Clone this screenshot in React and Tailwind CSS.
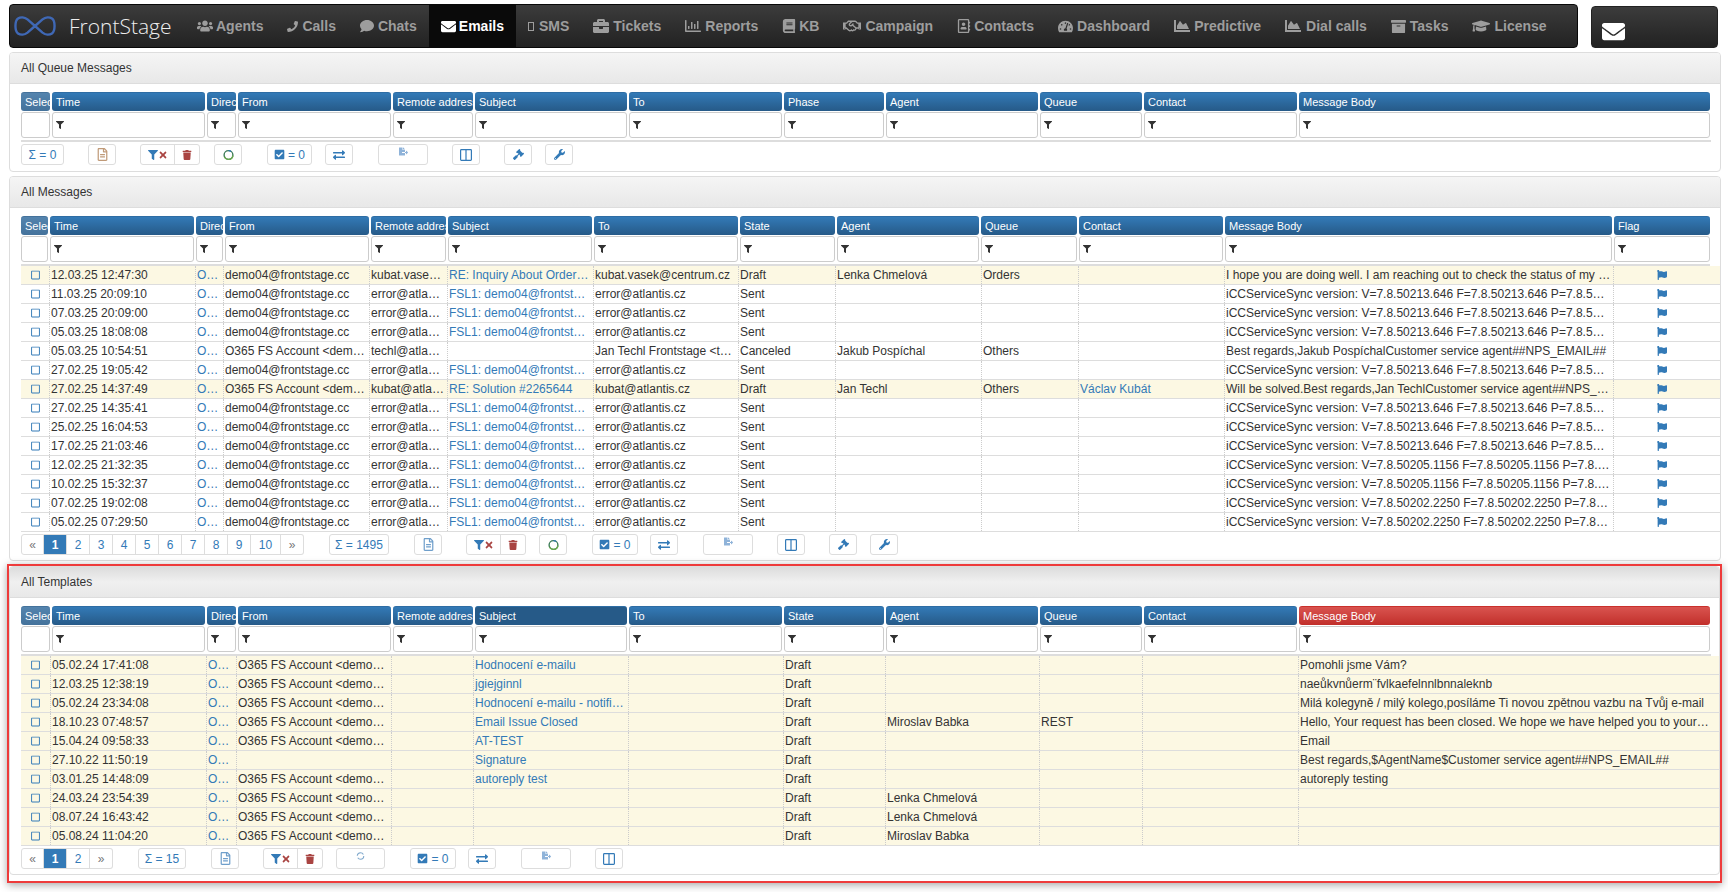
import React from "react";
import {
  FaUsers, FaPhone, FaComment, FaEnvelope, FaBriefcase, FaRegChartBar, FaBook, FaRegHandshake,
  FaRegAddressBook, FaTachometerAlt, FaChartArea, FaArchive, FaGraduationCap, FaFilter, FaTimes,
  FaTrash, FaRegFileAlt, FaCheckSquare, FaExchangeAlt, FaFileExport, FaGavel, FaWrench, FaFlag, FaRegSquare,
} from "react-icons/fa";

const NAV = [
  ["Agents", FaUsers, "w-[19px]", 16],
  ["Calls", FaPhone, "w-[15px]", 11],
  ["Chats", FaComment, "w-[18px]", 14],
  ["Emails", FaEnvelope, "w-[18px]", 15],
  ["SMS", null, "w-[11px]", 0],
  ["Tickets", FaBriefcase, "w-[20px]", 16],
  ["Reports", FaRegChartBar, "w-[20px]", 16],
  ["KB", FaBook, "w-[17px]", 14],
  ["Campaign", FaRegHandshake, "w-[22px]", 18],
  ["Contacts", FaRegAddressBook, "w-[17px]", 14],
  ["Dashboard", FaTachometerAlt, "w-[19px]", 15],
  ["Predictive", FaChartArea, "w-[20px]", 16],
  ["Dial calls", FaChartArea, "w-[21px]", 16],
  ["Tasks", FaArchive, "w-[19px]", 15],
  ["License", FaGraduationCap, "w-[22px]", 18],
];

const T1_HEAD = "grid-cols-[29px_153px_29px_153px_80px_152px_153px_100px_152px_102px_153px_411px]";
const T2_HEAD = "grid-cols-[27px_144px_27px_144px_75px_144px_144px_95px_142px_96px_144px_387px_96px]";
const T2_ROW = "grid-cols-[28px_146px_28px_146px_78px_146px_145px_97px_146px_97px_146px_389px_97px]";
const T3_ROW = "grid-cols-[29px_156px_30px_155px_82px_155px_155px_102px_154px_103px_156px_413px]";

const H1 = ["Select", "Time", "Direction", "From", "Remote address", "Subject", "To", "Phase", "Agent", "Queue", "Contact", "Message Body"];
const H2 = ["Select", "Time", "Direction", "From", "Remote address", "Subject", "To", "State", "Agent", "Queue", "Contact", "Message Body", "Flag"];
const H3 = ["Select", "Time", "Direction", "From", "Remote address", "Subject", "To", "State", "Agent", "Queue", "Contact", "Message Body"];

const DEMO = "demo04@frontstage.cc";
const O365 = "O365 FS Account <demo04@frontstage.cc>";
const ERR = "error@atlantis.cz";
const FSL = "FSL1: demo04@frontstage.cc";
const S1 = "iCCServiceSync version: V=7.8.50213.646 F=7.8.50213.646 P=7.8.50213.646";
const S2 = "iCCServiceSync version: V=7.8.50205.1156 F=7.8.50205.1156 P=7.8.50205.1156";
const S3 = "iCCServiceSync version: V=7.8.50202.2250 F=7.8.50202.2250 P=7.8.50202.2250";

const R2 = [
  ["12.03.25 12:47:30", DEMO, "kubat.vasek@centrum.cz", "RE: Inquiry About Order Status", "kubat.vasek@centrum.cz", "Draft", "Lenka Chmelová", "Orders", "", "I hope you are doing well. I am reaching out to check the status of my order", true],
  ["11.03.25 20:09:10", DEMO, ERR, FSL, ERR, "Sent", "", "", "", S1],
  ["07.03.25 20:09:00", DEMO, ERR, FSL, ERR, "Sent", "", "", "", S1],
  ["05.03.25 18:08:08", DEMO, ERR, FSL, ERR, "Sent", "", "", "", S1],
  ["05.03.25 10:54:51", O365, "techl@atlantis.cz", "", "Jan Techl Frontstage <techl@atlantis.cz>", "Canceled", "Jakub Pospíchal", "Others", "", "Best regards,Jakub PospíchalCustomer service agent##NPS_EMAIL##"],
  ["27.02.25 19:05:42", DEMO, ERR, FSL, ERR, "Sent", "", "", "", S1],
  ["27.02.25 14:37:49", O365, "kubat@atlantis.cz", "RE: Solution #2265644", "kubat@atlantis.cz", "Draft", "Jan Techl", "Others", "Václav Kubát", "Will be solved.Best regards,Jan TechlCustomer service agent##NPS_EMAIL##", true],
  ["27.02.25 14:35:41", DEMO, ERR, FSL, ERR, "Sent", "", "", "", S1],
  ["25.02.25 16:04:53", DEMO, ERR, FSL, ERR, "Sent", "", "", "", S1],
  ["17.02.25 21:03:46", DEMO, ERR, FSL, ERR, "Sent", "", "", "", S1],
  ["12.02.25 21:32:35", DEMO, ERR, FSL, ERR, "Sent", "", "", "", S2],
  ["10.02.25 15:32:37", DEMO, ERR, FSL, ERR, "Sent", "", "", "", S2],
  ["07.02.25 19:02:08", DEMO, ERR, FSL, ERR, "Sent", "", "", "", S3],
  ["05.02.25 07:29:50", DEMO, ERR, FSL, ERR, "Sent", "", "", "", S3],
];

const R3 = [
  ["05.02.24 17:41:08", O365, "", "Hodnocení e-mailu", "", "Draft", "", "", "", "Pomohli jsme Vám?", true],
  ["12.03.25 12:38:19", O365, "", "jgiejginnl", "", "Draft", "", "", "", "naeůkvnůerm¨fvlkaefelnnlbnnaleknb", true],
  ["05.02.24 23:34:08", O365, "", "Hodnocení e-mailu - notifikace", "", "Draft", "", "", "", "Milá kolegyně / milý kolego,posíláme Ti novou zpětnou vazbu na Tvůj e-mail", true],
  ["18.10.23 07:48:57", O365, "", "Email Issue Closed", "", "Draft", "Miroslav Babka", "REST", "", "Hello, Your request has been closed. We hope we have helped you to your satisfaction", true],
  ["15.04.24 09:58:33", O365, "", "AT-TEST", "", "Draft", "", "", "", "Email", true],
  ["27.10.22 11:50:19", "", "", "Signature", "", "Draft", "", "", "", "Best regards,$AgentName$Customer service agent##NPS_EMAIL##", true],
  ["03.01.25 14:48:09", O365, "", "autoreply test", "", "Draft", "", "", "", "autoreply testing", true],
  ["24.03.24 23:54:39", O365, "", "", "", "Draft", "Lenka Chmelová", "", "", "", true],
  ["08.07.24 16:43:42", O365, "", "", "", "Draft", "Lenka Chmelová", "", "", "", true],
  ["05.08.24 11:04:20", O365, "", "", "", "Draft", "Miroslav Babka", "", "", "", true],
];

const BLUE = "#337ab7";

function Logo() {
  return (
    <svg width="42" height="20" viewBox="0 0 42 20" fill="none" stroke="#3f68b5" strokeWidth="2.4" className="shrink-0">
      <path d="M21 10 L13.5 3.4 C10.5 1 6.5 0.9 4 2.6 C0.6 5 0.6 15 4 17.4 C6.5 19.1 10.5 19 13.5 16.6 L21 10 L28.5 3.4 C31.5 1 35.5 0.9 38 2.6 C41.4 5 41.4 15 38 17.4 C35.5 19.1 31.5 19 28.5 16.6 Z" />
    </svg>
  );
}

function NavBar() {
  return (
    <div className="flex pt-[4px] pl-[9px]">
      <nav className="flex w-[1569px] h-[44px] rounded-[4px] border border-[#080808] bg-linear-to-b from-[#3c3c3c] to-[#222222] overflow-hidden">
        <div className="flex items-center w-[175px] shrink-0 pl-[4px] gap-[13px]">
          <Logo />
          <span className="[font-family:'Open_Sans',sans-serif] font-light text-[21px] text-[#eeeeee] leading-none">FrontStage</span>
        </div>
        {NAV.map(([label, Icon, w, size]) => {
          const active = label === "Emails";
          return (
            <div key={label} className={active
              ? "flex items-center px-3 font-bold text-[14px] text-white bg-[#0a0a0a]"
              : "flex items-center px-3 font-bold text-[14px] text-[#9d9d9d]"}>
              <span className={`${w} flex items-center`}>
                {Icon ? <Icon size={size} /> : <span className="block w-[6px] h-[9px] border border-[#9d9d9d]" />}
              </span>
              <span className="whitespace-nowrap">{label}</span>
            </div>
          );
        })}
      </nav>
      <div className="ml-[13px] mt-[2px] w-[127px] h-[42px] rounded-[4px] border border-[#222222] bg-linear-to-b from-[#3c3c3c] to-[#222222] flex items-center pl-[10px] pt-[8px]">
        <FaEnvelope size={23} color="#ffffff" />
      </div>
    </div>
  );
}

function HeadCell({ label, variant }) {
  const base = "h-[19px] rounded-[3px] pl-[4px] flex items-center overflow-hidden whitespace-nowrap text-[11px] font-normal text-white border-t border-[#2e6da4] ";
  const cls = variant === "sel"
    ? "bg-linear-to-b from-[#5484ae] to-[#44729b] border-[#44729b]"
    : variant === "sort"
    ? "bg-[#265a88]"
    : variant === "red"
    ? "bg-linear-to-b from-[#d9534f] to-[#c12e2a] border-[#c9302c]"
    : "bg-linear-to-b from-[#337ab7] to-[#265a88]";
  return <div className={base + cls}>{label}</div>;
}

function Grid({ headers, cols, rowSort, redLast }) {
  return (
    <div className={`grid gap-x-[2px] ${cols}`}>
      {headers.map((h, i) => (
        <HeadCell
          key={h}
          label={h}
          variant={i === 0 ? "sel" : rowSort && h === "Subject" ? "sort" : redLast && h === "Message Body" ? "red" : ""}
        />
      ))}
      {headers.map((h, i) => (
        <div key={h} className="h-[26px] mt-[1px] rounded-[3px] border border-[#cccccc] bg-white flex items-center pl-[3px]">
          {i > 0 && <FaFilter size={8} color="#333333" />}
        </div>
      ))}
    </div>
  );
}

function Rows({ rows, cols, flag }) {
  return (
    <div>
      {rows.map((r) => (
        <div key={r[0]} className={`grid ${cols} h-[19px] border-b border-[#dddddd] text-[12px] leading-[18px] ${r[10] ? "bg-[#fcf8e3]" : "bg-white"}`}>
          <div className="flex items-center justify-center"><FaRegSquare className="w-[11px] h-[10px]" color={BLUE} /></div>
          <Cell>{r[0]}</Cell>
          <Cell blue>Outgoing</Cell>
          <Cell>{r[1]}</Cell>
          <Cell>{r[2]}</Cell>
          <Cell blue>{r[3]}</Cell>
          <Cell>{r[4]}</Cell>
          <Cell>{r[5]}</Cell>
          <Cell>{r[6]}</Cell>
          <Cell>{r[7]}</Cell>
          <Cell blue>{r[8]}</Cell>
          <Cell>{r[9]}</Cell>
          {flag && (
            <div className="border-l border-dotted border-[#cccccc] flex items-center justify-center">
              <FaFlag className="w-[12px] h-[10px]" color={BLUE} />
            </div>
          )}
        </div>
      ))}
    </div>
  );
}

function Cell({ children, blue }) {
  return (
    <div className={`border-l border-dotted border-[#cccccc] pl-[1px] pr-[2px] truncate ${blue ? "text-[#337ab7]" : "text-[#333333]"}`}>
      {children}
    </div>
  );
}

function Btn({ w, ml, children, align }) {
  return (
    <div className={`${w} ${ml} h-[21px] rounded-[3px] border border-[#dddddd] bg-white flex justify-center text-[12px] text-[#337ab7] whitespace-nowrap ${align === "top" ? "items-start pt-[2px]" : "items-center"}`}>
      {children}
    </div>
  );
}

function Ring({ small }) {
  if (small) {
    return (
      <svg width="9" height="10" viewBox="0 0 10 10" fill="none" strokeWidth="1.2">
        <circle cx="5" cy="5" r="3.6" stroke="#7fa8cc" strokeDasharray="9 2.3" />
      </svg>
    );
  }
  return (
    <svg width="11" height="12" viewBox="0 0 12 12" fill="none" strokeWidth="1.5" className="-rotate-90">
      <circle cx="6" cy="6" r="4.8" stroke="#3b7a57" />
      <circle cx="6" cy="6" r="4.8" stroke="#6aa84f" strokeDasharray="12 20" strokeDashoffset="-8" />
      <circle cx="6" cy="6" r="4.8" stroke="#337ab7" strokeDasharray="6 30" strokeDashoffset="3" />
    </svg>
  );
}

function Columns() {
  return (
    <svg width="12" height="12" viewBox="0 0 12 12" fill="none" stroke="#337ab7" strokeWidth="1.2">
      <rect x="0.6" y="0.6" width="10.8" height="10.8" rx="0.8" />
      <line x1="6" y1="1" x2="6" y2="11" />
    </svg>
  );
}

function FilterGroup({ ml }) {
  return (
    <div className={`w-[60px] ${ml} h-[21px] rounded-[3px] border border-[#dddddd] bg-white flex`}>
      <div className="w-[34px] border-r border-[#dddddd] flex items-center justify-center">
        <FaFilter size={10} color={BLUE} />
        <FaTimes size={10} color="#a94442" />
      </div>
      <div className="flex-1 flex items-center justify-center"><FaTrash size={10} color="#a94442" /></div>
    </div>
  );
}

function Pager({ pages }) {
  const cell = "h-[21px] flex items-center justify-center border-y border-r border-[#dddddd] text-[12px] text-[#337ab7]";
  return (
    <div className="flex">
      <div className={`w-[23px] ${cell} border-l rounded-l-[3px] text-[#777777]`}>«</div>
      {pages.map((p) => (
        <div key={p} className={`${p === 10 ? "w-[30px]" : "w-[23px]"} ${cell} ${p === 1 ? "bg-[#337ab7] text-white font-bold border-[#337ab7]" : ""}`}>{p}</div>
      ))}
      <div className={`w-[23px] ${cell} rounded-r-[3px] text-[#777777]`}>»</div>
    </div>
  );
}

function Toolbar1() {
  return (
    <div className="flex mt-[2px]">
      <Btn w="w-[43px]" ml="">Σ = 0</Btn>
      <Btn w="w-[28px]" ml="ml-[24px]"><FaRegFileAlt size={13} color="#c09a78" /></Btn>
      <FilterGroup ml="ml-[24px]" />
      <Btn w="w-[28px]" ml="ml-[14px]"><Ring /></Btn>
      <Btn w="w-[45px]" ml="ml-[25px]"><FaCheckSquare size={11} color={BLUE} /><span className="ml-[3px]">= 0</span></Btn>
      <Btn w="w-[28px]" ml="ml-[13px]"><FaExchangeAlt size={12} color={BLUE} /></Btn>
      <Btn w="w-[50px]" ml="ml-[25px]" align="top"><FaFileExport size={9} color="#8fb3d9" /></Btn>
      <Btn w="w-[28px]" ml="ml-[24px]"><Columns /></Btn>
      <Btn w="w-[28px]" ml="ml-[24px]"><FaGavel size={11} color={BLUE} /></Btn>
      <Btn w="w-[28px]" ml="ml-[13px]"><FaWrench size={11} color={BLUE} /></Btn>
    </div>
  );
}

function Toolbar2() {
  return (
    <div className="flex mt-[2px]">
      <Pager pages={[1, 2, 3, 4, 5, 6, 7, 8, 9, 10]} />
      <Btn w="w-[60px]" ml="ml-[25px]">Σ = 1495</Btn>
      <Btn w="w-[28px]" ml="ml-[25px]"><FaRegFileAlt size={13} color="#6f9fcb" /></Btn>
      <FilterGroup ml="ml-[24px]" />
      <Btn w="w-[28px]" ml="ml-[13px]"><Ring /></Btn>
      <Btn w="w-[46px]" ml="ml-[25px]"><FaCheckSquare size={11} color={BLUE} /><span className="ml-[3px]">= 0</span></Btn>
      <Btn w="w-[28px]" ml="ml-[12px]"><FaExchangeAlt size={12} color={BLUE} /></Btn>
      <Btn w="w-[50px]" ml="ml-[25px]" align="top"><FaFileExport size={9} color="#8fb3d9" /></Btn>
      <Btn w="w-[28px]" ml="ml-[24px]"><Columns /></Btn>
      <Btn w="w-[28px]" ml="ml-[24px]"><FaGavel size={11} color={BLUE} /></Btn>
      <Btn w="w-[28px]" ml="ml-[13px]"><FaWrench size={11} color={BLUE} /></Btn>
    </div>
  );
}

function Toolbar3() {
  return (
    <div className="flex mt-[2px]">
      <Pager pages={[1, 2]} />
      <Btn w="w-[48px]" ml="ml-[25px]">Σ = 15</Btn>
      <Btn w="w-[28px]" ml="ml-[25px]"><FaRegFileAlt size={13} color="#6f9fcb" /></Btn>
      <FilterGroup ml="ml-[24px]" />
      <Btn w="w-[49px]" ml="ml-[13px]" align="top"><Ring small /></Btn>
      <Btn w="w-[46px]" ml="ml-[25px]"><FaCheckSquare size={11} color={BLUE} /><span className="ml-[3px]">= 0</span></Btn>
      <Btn w="w-[28px]" ml="ml-[12px]"><FaExchangeAlt size={12} color={BLUE} /></Btn>
      <Btn w="w-[50px]" ml="ml-[25px]" align="top"><FaFileExport size={9} color="#8fb3d9" /></Btn>
      <Btn w="w-[28px]" ml="ml-[24px]"><Columns /></Btn>
    </div>
  );
}

function Panel({ title, className, dark, children }) {
  return (
    <section className={`rounded-[4px] border border-[#dddddd] bg-white overflow-hidden ${className}`}>
      <div className={`h-[31px] flex items-center pl-[11px] text-[12px] text-[#333333] border-b border-[#dddddd] bg-linear-to-b ${dark ? "from-[#dcdcdc] via-[#f0f0f0] to-[#e8e8e8]" : "from-[#f5f5f5] to-[#e8e8e8]"}`}>
        {title}
      </div>
      <div className="pl-[11px] pt-[8px]">{children}</div>
    </section>
  );
}

export default function App() {
  return (
    <div className="w-[1728px] h-[892px] overflow-hidden bg-white [font-family:'Liberation_Sans',Arial,sans-serif] text-[12px] text-[#333333]">
      <NavBar />

      <Panel title="All Queue Messages" className="mt-[4px] ml-[9px] w-[1712px] h-[120px]">
        <Grid headers={H1} cols={T1_HEAD} />
        <div className="mt-[2px] w-[1690px] h-[2px] bg-[#dddddd]" />
        <Toolbar1 />
      </Panel>

      <Panel title="All Messages" className="mt-[4px] ml-[9px] w-[1712px] h-[385px]">
        <Grid headers={H2} cols={T2_HEAD} />
        <div className="mt-[2px] w-[1689px] h-[2px] bg-[#dddddd]" />
        <Rows rows={R2} cols={T2_ROW} flag />
        <Toolbar2 />
      </Panel>

      <div className="mt-[3px] ml-[7px] w-[1715px] h-[319px] border-2 border-[#ee3b3b] shadow-[0_2px_8px_rgba(0,0,0,0.35)] bg-white">
        <Panel title="All Templates" dark className="w-[1711px] h-[309px]">
          <Grid headers={H3} cols={T1_HEAD} rowSort redLast />
          <div className="mt-[2px] w-[1690px] h-[2px] bg-[#dddddd]" />
          <Rows rows={R3} cols={T3_ROW} />
          <Toolbar3 />
        </Panel>
      </div>
    </div>
  );
}
